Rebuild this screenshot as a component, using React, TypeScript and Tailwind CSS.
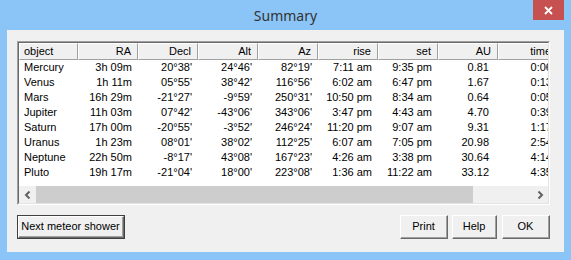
import React from "react";

const rows: string[][] = [
  ["Mercury", "3h 09m", "20°38'", "24°46'", "82°19'", "7:11 am", "9:35 pm", "0.81", "0:06"],
  ["Venus", "1h 11m", "05°55'", "38°42'", "116°56'", "6:02 am", "6:47 pm", "1.67", "0:13"],
  ["Mars", "16h 29m", "-21°27'", "-9°59'", "250°31'", "10:50 pm", "8:34 am", "0.64", "0:05"],
  ["Jupiter", "11h 03m", "07°42'", "-43°06'", "343°06'", "3:47 pm", "4:43 am", "4.70", "0:39"],
  ["Saturn", "17h 00m", "-20°55'", "-3°52'", "246°24'", "11:20 pm", "9:07 am", "9.31", "1:17"],
  ["Uranus", "1h 23m", "08°01'", "38°02'", "112°25'", "6:07 am", "7:05 pm", "20.98", "2:54"],
  ["Neptune", "22h 50m", "-8°17'", "43°08'", "167°23'", "4:26 am", "3:38 pm", "30.64", "4:14"],
  ["Pluto", "19h 17m", "-21°04'", "18°00'", "223°08'", "1:36 am", "11:22 am", "33.12", "4:35"],
];

const headers = ["object", "RA", "Decl", "Alt", "Az", "rise", "set", "AU", "time"];

function Btn({ label, w, def }: { label: string; w: string; def?: boolean }) {
  return (
    <div
      className={`${w} h-[24px] ${def ? "border border-[#404040]" : ""} bg-[#f0f0f0]`}
    >
      <div className="w-full h-full border-t border-l border-white border-r border-b border-r-[#696969] border-b-[#696969]">
        <div className="w-full h-full border-r border-b border-r-[#a0a0a0] border-b-[#a0a0a0] flex items-center justify-center text-[11px] text-black leading-none">
          {label}
        </div>
      </div>
    </div>
  );
}

export default function App() {
  return (
    <div
      className="w-[571px] h-[260px] bg-[#8bc4f6] flex flex-col overflow-hidden"
      style={{ fontFamily: '"Liberation Sans", Arial, sans-serif' }}
    >
      <div className="h-[30px] relative flex items-center justify-center shrink-0">
        <span
          className="text-[14px] text-[#333333] mt-[1px]"
          style={{ fontFamily: '"Noto Sans", "Open Sans", sans-serif' }}
        >
          Summary
        </span>
        <div className="absolute right-[7px] top-0 w-[31px] h-[20px] bg-[#c75050] flex items-center justify-center">
          <svg width="9" height="9" viewBox="0 0 9 9">
            <path d="M1 1 L8 8 M8 1 L1 8" stroke="white" strokeWidth="1.8" />
          </svg>
        </div>
      </div>

      <div className="mx-[7px] mb-[8px] flex-1 bg-[#f0f0f0] pl-[10px] pr-[14px] pt-[11px] flex flex-col">
        {/* list view */}
        <div className="w-[533px] h-[164px] border-t border-l border-[#a0a0a0] border-r border-b border-r-white border-b-white">
          <div className="w-full h-full border-t border-l border-[#696969] border-r border-b border-r-[#e3e3e3] border-b-[#e3e3e3] bg-white flex flex-col overflow-hidden">
            <div className="flex-1 overflow-hidden">
              <div className="flex w-[540px] h-[17px] text-[11px] text-black">
                {headers.map((h, i) => (
                  <div
                    key={h}
                    className={`${i === 0 ? "w-[59px] justify-start pl-[4px]" : "w-[60px] justify-end pr-[6px]"} shrink-0 h-[17px] flex items-center bg-[#f0f0f0] border-t border-l border-white border-r border-b border-r-[#a0a0a0] border-b-[#a0a0a0] whitespace-nowrap`}
                  >
                    {h}
                  </div>
                ))}
              </div>
              {rows.map((r) => (
                <div key={r[0]} className="flex w-[540px] h-[15px] text-[11px] text-black leading-[15px]">
                  {r.map((c, i) => (
                    <div
                      key={i}
                      className={`${
                        i === 0
                          ? "w-[59px] text-left pl-[5px]"
                          : i === 7
                          ? "w-[60px] text-right pr-[9px]"
                          : "w-[60px] text-right pr-[6px]"
                      } shrink-0 whitespace-nowrap`}
                    >
                      {c}
                    </div>
                  ))}
                </div>
              ))}
            </div>
            {/* horizontal scrollbar */}
            <div className="h-[17px] shrink-0 flex bg-[#f0f0f0]">
              <div className="w-[17px] h-full flex items-center justify-center">
                <svg width="8" height="8" viewBox="0 0 8 8">
                  <path d="M5.5 0.5 L2 4 L5.5 7.5" stroke="#606060" strokeWidth="2" fill="none" />
                </svg>
              </div>
              <div className="w-[437px] h-full bg-[#cdcdcd]" />
              <div className="flex-1" />
              <div className="w-[17px] h-full flex items-center justify-center">
                <svg width="8" height="8" viewBox="0 0 8 8">
                  <path d="M2.5 0.5 L6 4 L2.5 7.5" stroke="#606060" strokeWidth="2" fill="none" />
                </svg>
              </div>
            </div>
          </div>
        </div>

        {/* buttons */}
        <div className="mt-[10px] flex items-start justify-between">
          <Btn label="Next meteor shower" w="w-[108px]" def />
          <div className="flex">
            <Btn label="Print" w="w-[48px]" />
            <div className="w-[4px]" />
            <Btn label="Help" w="w-[45px]" />
            <div className="w-[5px]" />
            <Btn label="OK" w="w-[48px]" />
          </div>
        </div>
      </div>
    </div>
  );
}
